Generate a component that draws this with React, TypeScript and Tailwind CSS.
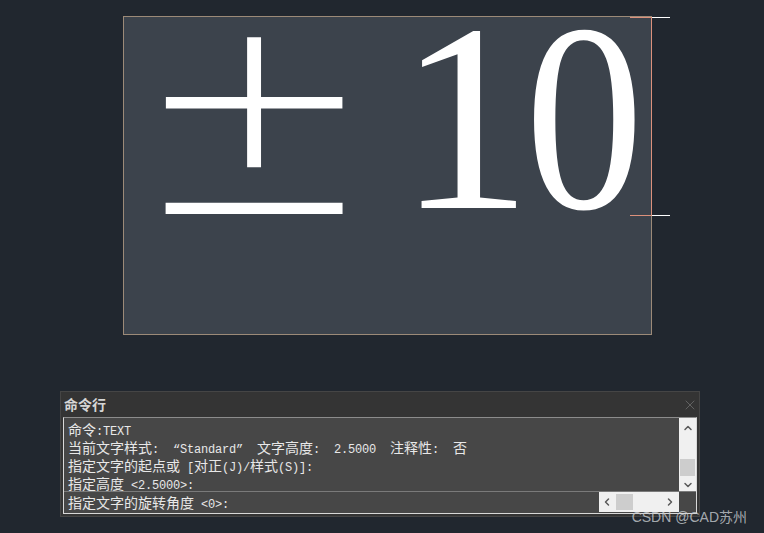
import { ChevronDown, ChevronLeft, ChevronRight, ChevronUp, X } from "lucide-react";

const cjk = /([\u2E80-\u9FFF\uFF00-\uFFEF]+)/;

function Line({ text }: { text: string }) {
  return (
    <div className="h-[18px] leading-[18px] whitespace-pre">
      {text.split(cjk).map((s, i) =>
        i % 2 === 1 ? (
          <span key={i} className="font-['Noto_Sans_CJK_SC',sans-serif] text-[14px] tracking-normal">
            {s}
          </span>
        ) : (
          s
        )
      )}
    </div>
  );
}

const history = [
  "命令:TEXT",
  "当前文字样式:  “Standard”  文字高度:  2.5000  注释性:  否",
  "指定文字的起点或 [对正(J)/样式(S)]:",
  "指定高度 <2.5000>:",
];

export default function App() {
  return (
    <div className="relative w-[764px] h-[533px] overflow-hidden bg-[#21272f] pt-[16px]">
      {/* drawing area */}
      <div className="relative ml-[123px] w-[529px] h-[319px] border border-[#9c8a78] bg-[#3c434c]">
        <span className="absolute left-[12px] top-[-41px] font-['DejaVu_Sans',sans-serif] font-extralight text-[282px] leading-none text-white">
          ±
        </span>
        <span className="absolute left-[274px] top-[-33px] font-['Liberation_Serif',serif] text-[268px] leading-none text-white">
          1
        </span>
        <span className="absolute left-[401px] top-[-33px] origin-left scale-x-[0.885] font-['Liberation_Serif',serif] text-[268px] leading-none text-white">
          0
        </span>

        {/* grip / selection marks */}
        <div className="absolute left-[527px] top-0 w-px h-[199px] bg-[#dc917c]" />
        <div className="absolute left-[506px] top-0 w-[22px] h-px bg-[#dc917c]" />
        <div className="absolute left-[506px] top-[198px] w-[22px] h-px bg-[#dc917c]" />
        <div className="absolute left-[528px] top-0 w-[18px] h-px bg-white" />
        <div className="absolute left-[528px] top-[198px] w-[18px] h-px bg-white" />
      </div>

      {/* command line panel */}
      <div className="ml-[60px] mt-[56px] w-[640px] h-[126px] border border-[#454545] bg-[#343434] flex flex-col">
        <div className="h-[25px] flex items-center justify-between pl-[3px] pr-[1px]">
          <span className="font-['Noto_Sans_CJK_SC',sans-serif] text-[14px] font-bold text-[#d6d6d6]">命令行</span>
          <X size={16} strokeWidth={1.3} className="text-[#6a6a6a]" />
        </div>
        <div className="mx-[2px] h-[97px] border border-[#d8d8d8] border-t-[#8c8c8c] bg-[#474747] flex flex-col text-[#e8e8e8] font-['Liberation_Mono','Noto_Sans_CJK_SC',monospace] text-[12px] tracking-[-0.2px]">
          <div className="h-[74px] flex border-b border-[#7a7a7a]">
            <div className="flex-1 pl-[4px] pt-[2px]">
              {history.map((t) => (
                <Line key={t} text={t} />
              ))}
            </div>
            <div className="w-[17px] bg-[#f0f0f0] flex flex-col items-center">
              <ChevronUp size={12} strokeWidth={3} className="mt-[4px] text-[#5a5a5a]" />
              <div className="mt-[25px] w-[15px] h-[17px] bg-[#cdcdcd]" />
              <ChevronDown size={12} strokeWidth={3} className="mt-[3px] text-[#5a5a5a]" />
            </div>
          </div>
          <div className="h-[20px] flex">
            <div className="flex-1 pl-[4px] pt-px">
              <Line text="指定文字的旋转角度 <0>:" />
            </div>
            <div className="w-[80px] bg-[#f0f0f0] flex items-center">
              <ChevronLeft size={12} strokeWidth={3} className="ml-[2px] text-[#5a5a5a]" />
              <div className="ml-[3px] w-[17px] h-[16px] bg-[#cdcdcd]" />
              <ChevronRight size={12} strokeWidth={3} className="ml-auto mr-[3px] text-[#5a5a5a]" />
            </div>
            <div className="w-[17px]" />
          </div>
        </div>
      </div>

      <span className="absolute right-[17px] bottom-[9px] font-['Liberation_Sans',Arial,'Noto_Sans_CJK_SC',sans-serif] text-[14px] leading-none text-[#c8ccd0]/80">
        CSDN @CAD苏州
      </span>
    </div>
  );
}
